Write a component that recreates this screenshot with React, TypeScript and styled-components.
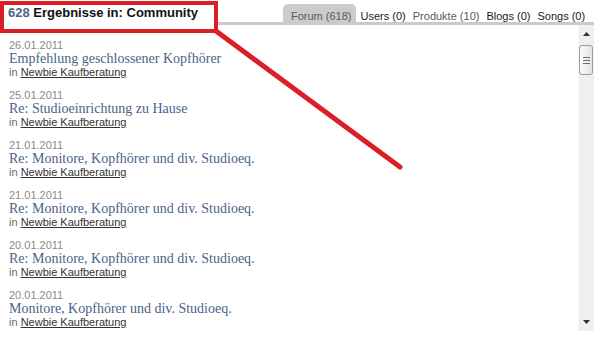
import React from "react";
import styled, { createGlobalStyle } from "styled-components";

const Global = createGlobalStyle`
  html, body { margin: 0; padding: 0; background: #fff; }
  body { font-family: "Liberation Sans", Arial, sans-serif; }
`;

const Page = styled.div`
  position: relative;
  width: 604px;
  height: 337px;
  overflow: hidden;
  background: #fff;
`;

const Header = styled.div`
  display: flex;
  height: 25px;
  margin-right: 10px;
`;

const Title = styled.h1`
  margin: 0;
  width: 216px;
  flex: none;
  padding: 0 0 0 8px;
  box-sizing: border-box;
  background: #fff;
  font-size: 13px;
  font-weight: bold;
  line-height: 25px;
  color: #111;
  white-space: nowrap;
`;

const Count = styled.span`
  color: #4b6587;
`;

const TabBar = styled.div`
  flex: 1;
  display: flex;
  align-items: flex-end;
  gap: 3px;
  padding-left: 67px;
  border-bottom: 3px solid #cacaca;
`;

const Tab = styled.div<{ $active?: boolean; $muted?: boolean }>`
  height: 18px;
  box-sizing: border-box;
  padding: 7px 2px 0 2px;
  ${(p) => (p.$active ? "padding: 7px 4px 0 8px;" : "")}
  font-size: 11px;
  line-height: 11px;
  white-space: nowrap;
  border-radius: 5px 5px 0 0;
  background: ${(p) => (p.$active ? "#cbcbcb" : "transparent")};
  color: ${(p) => (p.$active || p.$muted ? "#5a5a5a" : "#1a1a1a")};
`;

const Body = styled.div`
  display: flex;
  height: 312px;
  margin-right: 10px;
`;

const List = styled.div`
  flex: 1;
  padding: 13px 0 0 9px;
  display: flex;
  flex-direction: column;
  gap: 9px;
`;

const Entry = styled.div`
  display: flex;
  flex-direction: column;
`;

const Date = styled.div`
  font-size: 11px;
  line-height: 14px;
  color: #8a8a8a;
`;

const EntryTitle = styled.div`
  font-family: "Liberation Serif", "Times New Roman", serif;
  font-size: 14px;
  line-height: 14px;
  color: #4a6388;
`;

const Where = styled.div`
  font-size: 11px;
  line-height: 13px;
  color: #6a6a6a;
`;

const Board = styled.span`
  color: #333;
  text-decoration: underline;
`;

const Scrollbar = styled.div`
  width: 16px;
  height: 306px;
  flex: none;
  display: flex;
  flex-direction: column;
  background: #efefef;
  border-left: 1px solid #f7f7f7;
  box-sizing: border-box;
`;

const ArrowButton = styled.div`
  height: 18px;
  display: flex;
  align-items: center;
  justify-content: center;
  flex: none;
`;

const Track = styled.div`
  flex: 1;
  padding-top: 2px;
`;

const Thumb = styled.div`
  height: 30px;
  margin: 0 1px 0 0;
  border: 1px solid #9c9c9c;
  border-radius: 3px;
  box-sizing: border-box;
  background: linear-gradient(to right, #fafafa, #e4e4e4);
  display: flex;
  flex-direction: column;
  align-items: center;
  justify-content: center;
  gap: 2px;
`;

const Grip = styled.div`
  width: 7px;
  height: 1px;
  background: #6f6f6f;
`;

const Annotation = styled.svg`
  position: absolute;
  left: 0;
  top: 0;
  pointer-events: none;
`;

const entries = [
  { date: "26.01.2011", title: "Empfehlung geschlossener Kopfhörer" },
  { date: "25.01.2011", title: "Re: Studioeinrichtung zu Hause" },
  { date: "21.01.2011", title: "Re: Monitore, Kopfhörer und div. Studioeq." },
  { date: "21.01.2011", title: "Re: Monitore, Kopfhörer und div. Studioeq." },
  { date: "20.01.2011", title: "Re: Monitore, Kopfhörer und div. Studioeq." },
  { date: "20.01.2011", title: "Monitore, Kopfhörer und div. Studioeq." },
];

export default function App() {
  return (
    <Page>
      <Global />
      <Header>
        <Title>
          <Count>628</Count> Ergebnisse in: Community
        </Title>
        <TabBar>
          <Tab $active>Forum (618)</Tab>
          <Tab>Users (0)</Tab>
          <Tab $muted>Produkte (10)</Tab>
          <Tab>Blogs (0)</Tab>
          <Tab>Songs (0)</Tab>
        </TabBar>
      </Header>
      <Body>
        <List>
          {entries.map((e, i) => (
            <Entry key={i}>
              <Date>{e.date}</Date>
              <EntryTitle>{e.title}</EntryTitle>
              <Where>
                in <Board>Newbie Kaufberatung</Board>
              </Where>
            </Entry>
          ))}
        </List>
        <Scrollbar>
          <ArrowButton>
            <svg width="7" height="4" viewBox="0 0 7 4">
              <path d="M0 4 L3.5 0 L7 4 Z" fill="#333" />
            </svg>
          </ArrowButton>
          <Track>
            <Thumb>
              <Grip />
              <Grip />
              <Grip />
            </Thumb>
          </Track>
          <ArrowButton>
            <svg width="7" height="4" viewBox="0 0 7 4">
              <path d="M0 0 L7 0 L3.5 4 Z" fill="#333" />
            </svg>
          </ArrowButton>
        </Scrollbar>
      </Body>
      <Annotation width="604" height="337" viewBox="0 0 604 337">
        <rect x="2" y="3" width="214" height="28" fill="none" stroke="#db1f26" strokeWidth="4" />
        <line x1="216" y1="31" x2="400" y2="167" stroke="#db1f26" strokeWidth="5" strokeLinecap="round" />
      </Annotation>
    </Page>
  );
}
